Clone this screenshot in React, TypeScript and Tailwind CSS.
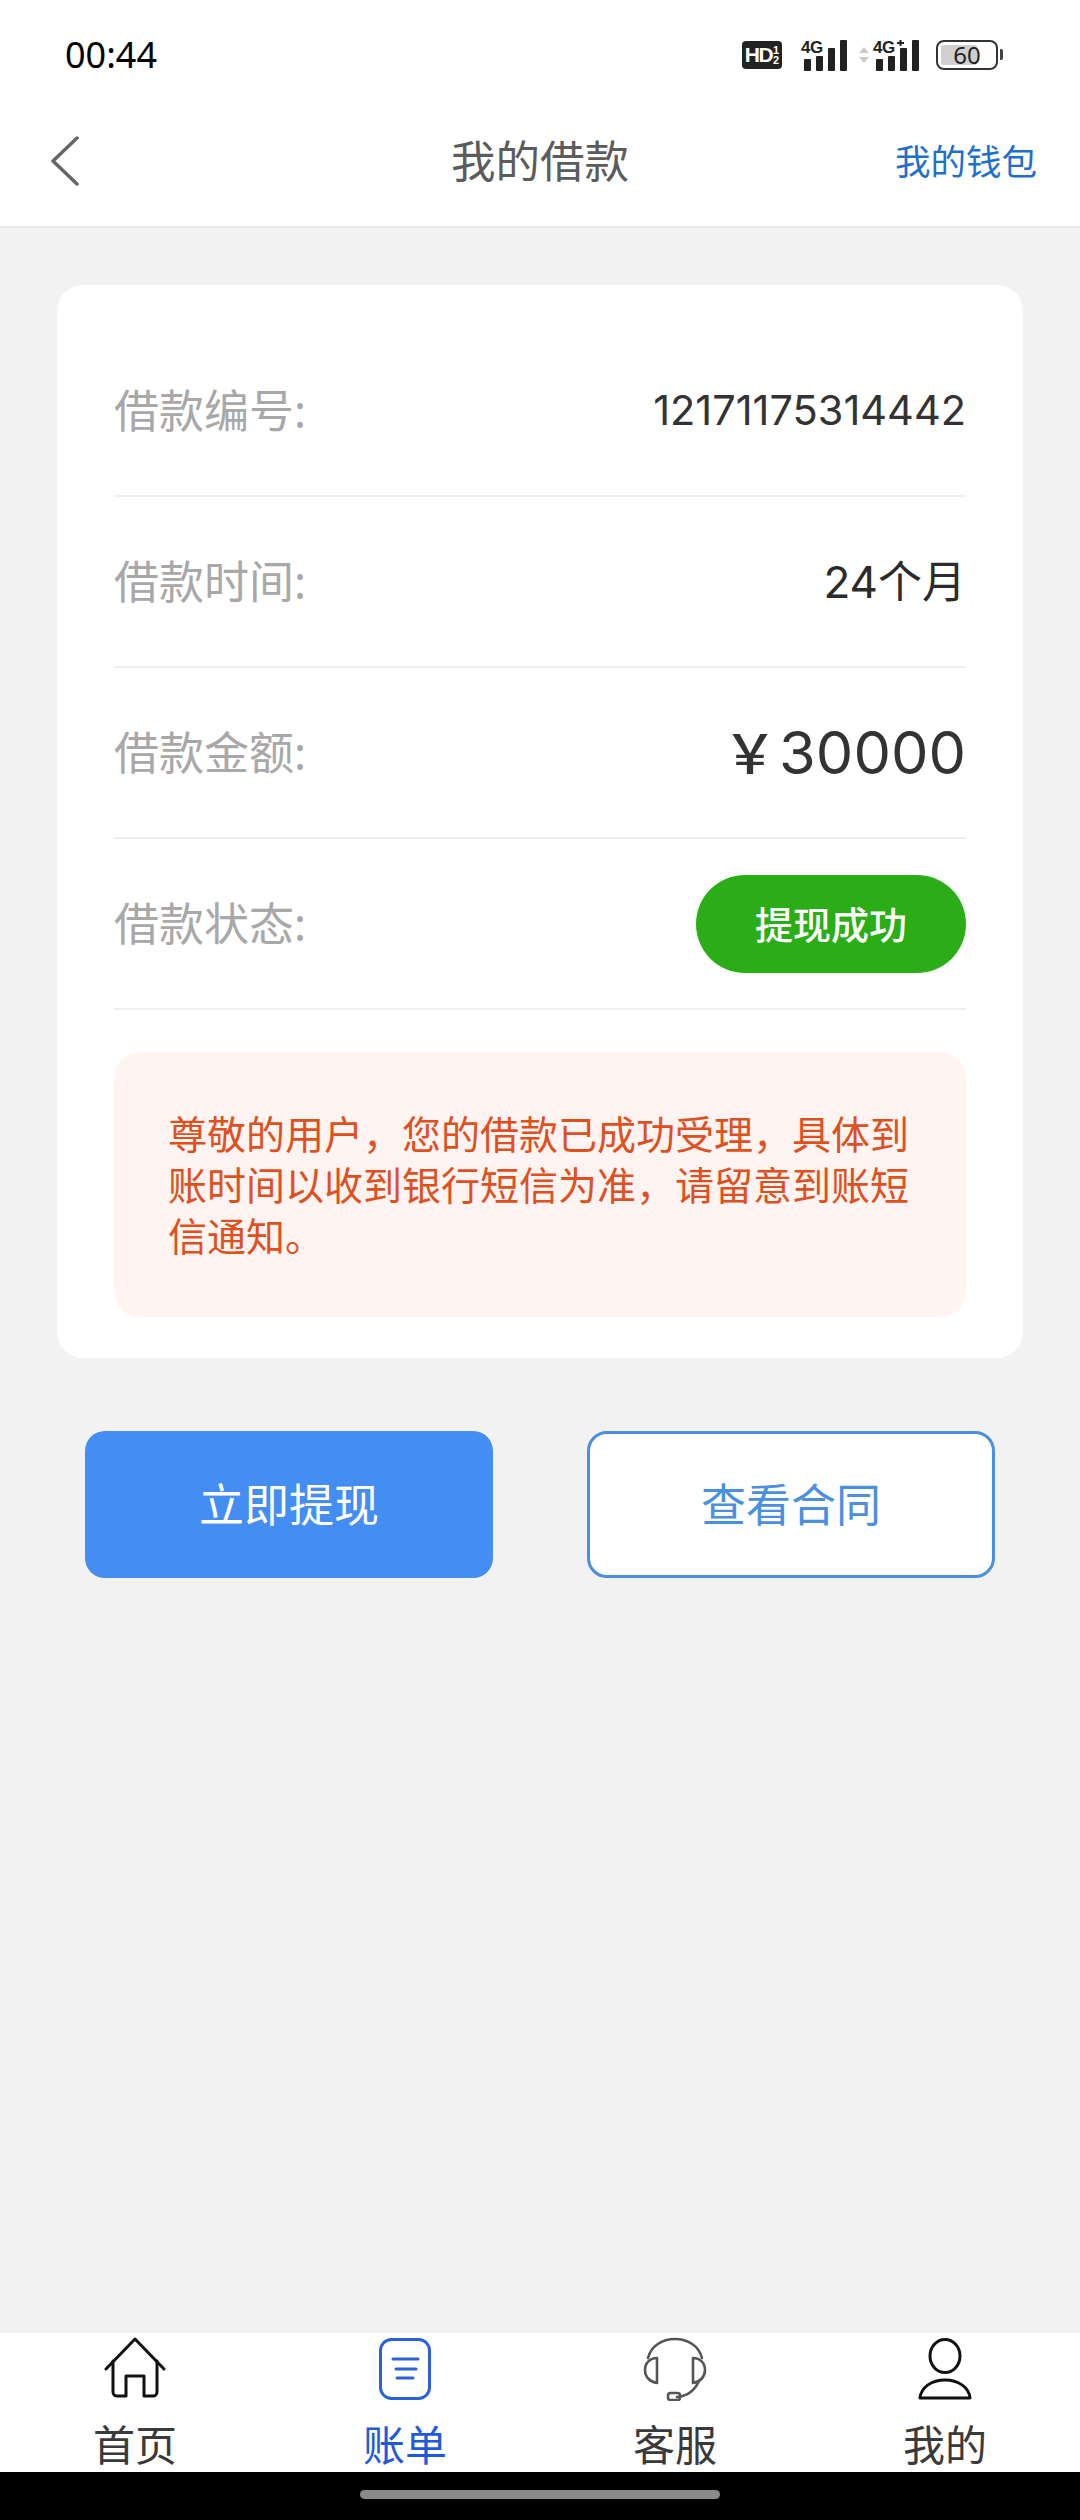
import React from "react";

const FONT = "font-['Noto_Sans','Noto_Sans_CJK_SC',sans-serif]";
const DIGITS = "font-['Inter','Noto_Sans_CJK_SC',sans-serif]";

function Signal({ plus }: { plus?: boolean }) {
  return (
    <div className="relative w-[46px] h-[32px] shrink-0">
      <svg width="46" height="32" viewBox="0 0 46 32" className="block">
        {plus && <path d="M24 4h7M27.5 1v6" stroke="#222" strokeWidth="2" />}
        <rect x="3" y="20" width="7" height="12" rx="1" fill="#222" />
        <rect x="15" y="17" width="7" height="15" rx="1" fill="#222" />
        <rect x="27" y="9" width="7" height="23" rx="1" fill="#222" />
        <rect x="39" y="1" width="7" height="31" rx="1" fill="#222" />
      </svg>
      <span className="absolute left-0 top-[1px] text-[17px] leading-[15px] font-bold tracking-[-0.5px] text-[#222] font-['Liberation_Sans']">4G</span>
    </div>
  );
}

function StatusBar() {
  return (
    <div className="h-[109px] flex items-center pl-[65px] pr-[77px] justify-between">
      <span className="text-[36px] leading-none text-black">00:44</span>
      <div className="flex items-center">
        <div className="w-[40px] h-[28px] rounded-[4px] bg-[#222] text-white flex items-center justify-center gap-[1px] font-['Liberation_Sans'] font-bold">
          <span className="text-[21px] leading-none tracking-[-1.5px]">HD</span>
          <span className="text-[11px] leading-[10px] flex flex-col items-center">
            <span>1</span>
            <span>2</span>
          </span>
        </div>
        <div className="ml-[19px]">
          <Signal />
        </div>
        <svg width="10" height="18" viewBox="0 0 10 18" className="ml-[12px]">
          <path d="M5 1l5 6H0zM0 11h10l-5 6z" fill="#c9c9c9" />
        </svg>
        <div className="ml-[4px]">
          <Signal plus />
        </div>
        <div className="ml-[17px] w-[62px] h-[30px] border-[2px] border-[#333] rounded-[8px] p-[3px] relative">
          <div className="w-[36px] h-full bg-[#cfcfcf] rounded-[2px]" />
          <span className="absolute inset-0 flex items-center justify-center text-[24px] leading-none text-[#222]">60</span>
        </div>
        <div className="ml-[2px] w-[3px] h-[11px] bg-[#444] rounded-r-[2px]" />
      </div>
    </div>
  );
}

function Header() {
  return (
    <div className="h-[119px] bg-white border-b-[2px] border-[#e8e8e8] relative flex items-center justify-center">
      <svg width="30" height="50" viewBox="0 0 30 50" className="absolute left-[50px] top-[27px]" fill="none">
        <path d="M27 2L3 25l24 23" stroke="#666" strokeWidth="3.5" strokeLinecap="round" strokeLinejoin="round" />
      </svg>
      <span className="text-[44.5px] leading-none text-[#5c5c5c] mt-[-12px]">我的借款</span>
      <span className="absolute right-[43px] top-[35px] text-[35.5px] leading-none text-[#1f6fd0]">我的钱包</span>
    </div>
  );
}

function Row({ label, children }: { label: string; children: React.ReactNode }) {
  return (
    <div className="h-[171px] border-b-[2px] border-[#efefef] flex items-center justify-between">
      <span className="text-[45px] leading-none text-[#a8a8a8]">{label}</span>
      {children}
    </div>
  );
}

function Tab({ label, active, children }: { label: string; active?: boolean; children: React.ReactNode }) {
  return (
    <div className="flex-1 flex flex-col items-center pt-[4px]">
      <div className="h-[64px] flex items-center justify-center">{children}</div>
      <span className={`mt-[22px] text-[42px] leading-[44px] ${active ? "text-[#1f5bd8]" : "text-[#3a3a3a]"}`}>{label}</span>
    </div>
  );
}

export default function App() {
  return (
    <div className={`h-[2520px] w-[1080px] bg-[#f2f2f3] flex flex-col ${FONT}`}>
      <div className="bg-white">
        <StatusBar />
        <Header />
      </div>

      <div className="mt-[57px] mx-[57px] bg-white rounded-[26px] px-[57px] pt-[41px] pb-[41px]">
        <Row label="借款编号:">
          <span className={`text-[41.5px] leading-none text-[#333] ${DIGITS}`}>12171175314442</span>
        </Row>
        <Row label="借款时间:">
          <span className={`text-[44px] leading-none text-[#2b2b2b] ${DIGITS}`}>24个月</span>
        </Row>
        <Row label="借款金额:">
          <span className={`flex items-baseline leading-none text-[#333] ${DIGITS}`}>
            <span className="text-[54px] font-medium">￥</span>
            <span className="ml-[2px] text-[59.5px]">30000</span>
          </span>
        </Row>
        <Row label="借款状态:">
          <span className="w-[270px] h-[98px] rounded-full bg-[#2aad16] text-white text-[38px] font-medium leading-none flex items-center justify-center">
            提现成功
          </span>
        </Row>
        <div className="mt-[42px] bg-[#fff4f2] rounded-[26px] py-[56px] pl-[54px] pr-[48px] text-[39px] leading-[51px] text-[#e0501f]">
          尊敬的用户，您的借款已成功受理，具体到账时间以收到银行短信为准，请留意到账短信通知。
        </div>
      </div>

      <div className="mt-[73px] mx-[85px] flex justify-between">
        <button className="w-[408px] h-[147px] rounded-[20px] bg-[#448df2] text-white text-[45px] leading-none">立即提现</button>
        <button className="w-[408px] h-[147px] rounded-[20px] bg-white border-[3px] border-[#4a8fe0] text-[#4a8fe0] text-[45px] leading-none">查看合同</button>
      </div>

      <div className="flex-1" />

      <div className="h-[139px] bg-white flex">
        <Tab label="首页">
          <svg width="64" height="64" viewBox="0 0 64 64" fill="none" stroke="#111" strokeWidth="3" strokeLinecap="round" strokeLinejoin="round">
            <path d="M3 32L32 2l29 30" />
            <path d="M10 24v31a4 4 0 0 0 4 4h9V39h18v20h9a4 4 0 0 0 4-4V24" />
          </svg>
        </Tab>
        <Tab label="账单" active>
          <svg width="52" height="62" viewBox="0 0 52 62" fill="none" stroke="#2a62d8" strokeWidth="3" strokeLinecap="round">
            <rect x="1.5" y="1.5" width="49" height="59" rx="11" />
            <path d="M14 21h25M17 31h20M18 40h16" />
          </svg>
        </Tab>
        <Tab label="客服">
          <svg width="64" height="64" viewBox="0 0 64 64" fill="none" stroke="#555" strokeWidth="2.6" strokeLinecap="round" strokeLinejoin="round">
            <path d="M5 21C8 9 19 2 32 2s24 7 27 19" />
            <path d="M14 21v25C7 45 2 40 2 33s5-12 12-12z" />
            <path d="M50 21v25c7-1 12-6 12-13s-5-12-12-12z" />
            <path d="M56 44c-4 9-12 15-22 16" />
            <rect x="25" y="56" width="12" height="7" rx="2.5" />
          </svg>
        </Tab>
        <Tab label="我的">
          <svg width="54" height="62" viewBox="0 0 54 62" fill="none" stroke="#111" strokeWidth="3" strokeLinejoin="round">
            <ellipse cx="27" cy="18" rx="15" ry="16.5" />
            <path d="M2 60c1-11 12-18 25-18s24 7 25 18z" />
          </svg>
        </Tab>
      </div>

      <div className="h-[48px] bg-black flex justify-center pt-[18px]">
        <div className="w-[360px] h-[9px] rounded-full bg-[#8a8a8a]" />
      </div>
    </div>
  );
}
